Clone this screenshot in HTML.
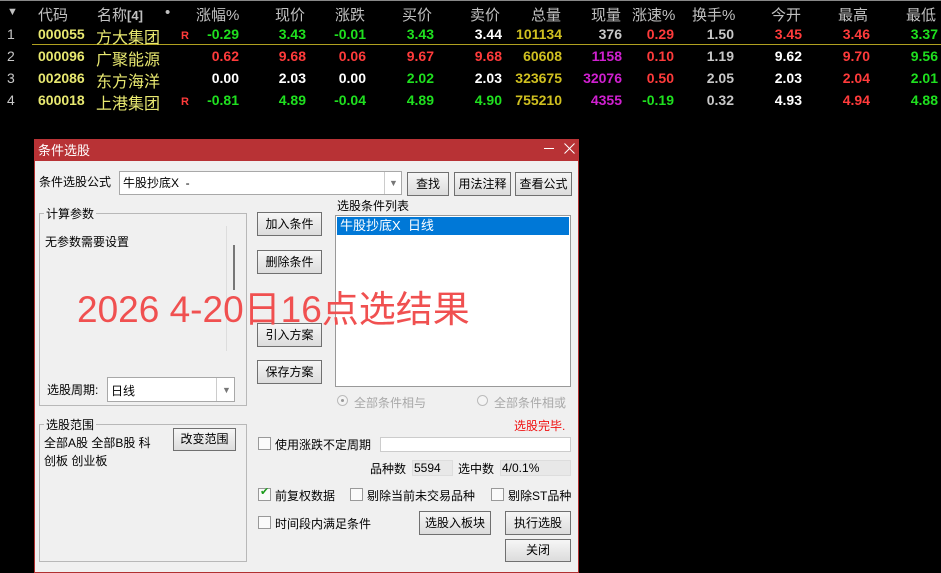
<!DOCTYPE html><html><head><meta charset="utf-8"><style>
*{margin:0;padding:0;box-sizing:border-box}
body{width:941px;height:573px;background:#000;position:relative;overflow:hidden;font-family:"Liberation Sans","Noto Sans CJK SC",sans-serif}
.a{position:absolute;white-space:nowrap}
.h{color:#c0c0c0;font-size:15px;top:4px}
.r{font-size:14px;font-weight:bold;text-align:right}
.c{color:#e8e870;font-size:14px;font-weight:bold}
.n{color:#e8e870;font-size:16px}
.g{color:#1fe01f}.rd{color:#ff3b3b}.w{color:#fff}.y{color:#d0c020}.m{color:#d020d0}.s{color:#c8c8c8}
.d{font-size:12px;color:#000}
.btn{position:absolute;background:linear-gradient(#f6f6f6,#dcdcdc);border:1px solid #707070;font-size:12px;text-align:center;color:#000}
.box{position:absolute;background:#fff;border:1px solid #a8a8a8}
.grp{position:absolute;border:1px solid #b8b8b8}
.cb{position:absolute;width:13px;height:13px;border:1px solid #999;background:#fafafa}
</style></head><body>
<div class="a" style="left:0;top:0;width:941px;height:1px;background:#888"></div>
<div class="a h" style="left:7px;font-size:11px;top:6px">▼</div>
<div class="a h" style="left:38px">代码</div>
<div class="a h" style="left:97px">名称<b style="font-size:13px">[4]</b></div>
<div class="a h" style="left:165px">•</div>
<div class="a h" style="left:196px">涨幅%</div>
<div class="a h" style="left:275px">现价</div>
<div class="a h" style="left:335px">涨跌</div>
<div class="a h" style="left:402px">买价</div>
<div class="a h" style="left:470px">卖价</div>
<div class="a h" style="left:531px">总量</div>
<div class="a h" style="left:591px">现量</div>
<div class="a h" style="left:632px">涨速%</div>
<div class="a h" style="left:692px">换手%</div>
<div class="a h" style="left:771px">今开</div>
<div class="a h" style="left:838px">最高</div>
<div class="a h" style="left:906px">最低</div>
<div class="a" style="left:32px;top:44px;width:909px;height:1px;background:#b0a020"></div>
<div id="rows"></div>
<script>
var rows=[
[1,"000055","方大集团",1,["g","-0.29"],["g","3.43"],["g","-0.01"],["g","3.43"],["w","3.44"],["y","101134"],["s","376"],["rd","0.29"],["s","1.50"],["rd","3.45"],["rd","3.46"],["g","3.37"]],
[2,"000096","广聚能源",0,["rd","0.62"],["rd","9.68"],["rd","0.06"],["rd","9.67"],["rd","9.68"],["y","60608"],["m","1158"],["rd","0.10"],["s","1.19"],["w","9.62"],["rd","9.70"],["g","9.56"]],
[3,"002086","东方海洋",0,["w","0.00"],["w","2.03"],["w","0.00"],["g","2.02"],["w","2.03"],["y","323675"],["m","32076"],["rd","0.50"],["s","2.05"],["w","2.03"],["rd","2.04"],["g","2.01"]],
[4,"600018","上港集团",1,["g","-0.81"],["g","4.89"],["g","-0.04"],["g","4.89"],["g","4.90"],["y","755210"],["m","4355"],["g","-0.19"],["s","0.32"],["w","4.93"],["rd","4.94"],["g","4.88"]]];
var R=[239,306,366,434,502,562,622,674,734,802,870,938],h="";
rows.forEach(function(r,i){var t=26+i*22;
h+='<div class="a s" style="left:7px;top:'+(t)+'px;font-size:14px">'+r[0]+'</div>';
h+='<div class="a c" style="left:38px;top:'+t+'px">'+r[1]+'</div>';
h+='<div class="a n" style="left:96px;top:'+(t-2)+'px">'+r[2]+'</div>';
if(r[3])h+='<div class="a rd" style="left:181px;top:'+(t+4)+'px;font-size:11px;font-weight:bold">R</div>';
for(var k=0;k<12;k++){var v=r[4+k];h+='<div class="a r '+v[0]+'" style="right:'+(941-R[k])+'px;top:'+t+'px">'+v[1]+'</div>';}
});
document.getElementById('rows').innerHTML=h;
</script>
<div class="a" style="left:34px;top:139px;width:545px;height:434px;background:#f0f0f0;border:1px solid #b03030;border-top:none"></div>
<div class="a" style="left:34px;top:139px;width:545px;height:22px;background:#b83235"></div>
<div class="a" style="left:38px;top:140px;color:#fff;font-size:13px">条件选股</div>
<div class="a" style="left:544px;top:148px;width:10px;height:1px;background:#fff"></div>
<svg class="a" style="left:564px;top:143px" width="11" height="11"><path d="M0.5 0.5L10.5 10.5M10.5 0.5L0.5 10.5" stroke="#fff" stroke-width="1"/></svg>
<div class="a d" style="left:39px;top:173px">条件选股公式</div>
<div class="box" style="left:119px;top:171px;width:283px;height:24px"></div>
<div class="a d" style="left:123px;top:174px">牛股抄底X &nbsp;-</div>
<div class="a" style="left:384px;top:172px;width:1px;height:22px;background:#ccc"></div>
<div class="a" style="left:389px;top:178px;color:#777;font-size:9px">▼</div>
<div class="btn" style="left:407px;top:172px;width:42px;height:24px;line-height:22px">查找</div>
<div class="btn" style="left:454px;top:172px;width:57px;height:24px;line-height:22px">用法注释</div>
<div class="btn" style="left:515px;top:172px;width:57px;height:24px;line-height:22px">查看公式</div>
<div class="grp" style="left:39px;top:213px;width:208px;height:193px"></div>
<div class="a d" style="left:44px;top:205px;background:#f0f0f0;padding:0 2px">计算参数</div>
<div class="a d" style="left:45px;top:233px">无参数需要设置</div>
<div class="a" style="left:226px;top:226px;width:1px;height:125px;background:#ddd"></div>
<div class="a" style="left:233px;top:245px;width:2px;height:45px;background:#777"></div>
<div class="a d" style="left:47px;top:381px">选股周期:</div>
<div class="box" style="left:107px;top:377px;width:128px;height:25px"></div>
<div class="a d" style="left:111px;top:382px">日线</div>
<div class="a" style="left:216px;top:378px;width:1px;height:23px;background:#ccc"></div>
<div class="a" style="left:222px;top:385px;color:#777;font-size:9px">▼</div>
<div class="btn" style="left:257px;top:212px;width:65px;height:24px;line-height:22px">加入条件</div>
<div class="btn" style="left:257px;top:250px;width:65px;height:24px;line-height:22px">删除条件</div>
<div class="btn" style="left:257px;top:323px;width:65px;height:24px;line-height:22px">引入方案</div>
<div class="btn" style="left:257px;top:360px;width:65px;height:24px;line-height:22px">保存方案</div>
<div class="a d" style="left:337px;top:197px">选股条件列表</div>
<div class="box" style="left:335px;top:215px;width:236px;height:172px;border-color:#999"></div>
<div class="a" style="left:337px;top:217px;width:232px;height:18px;background:#0078d7;color:#fff;font-size:13px;padding-left:3px;line-height:18px">牛股抄底X &nbsp;日线</div>
<div class="a" style="left:337px;top:395px;width:11px;height:11px;border-radius:50%;border:1px solid #bbb;background:#f4f4f4"></div>
<div class="a" style="left:341px;top:399px;width:3px;height:3px;border-radius:50%;background:#999"></div>
<div class="a" style="left:354px;top:394px;font-size:12px;color:#a8a8a8">全部条件相与</div>
<div class="a" style="left:477px;top:395px;width:11px;height:11px;border-radius:50%;border:1px solid #bbb;background:#f4f4f4"></div>
<div class="a" style="left:494px;top:394px;font-size:12px;color:#a8a8a8">全部条件相或</div>
<div class="grp" style="left:39px;top:424px;width:208px;height:138px"></div>
<div class="a d" style="left:44px;top:416px;background:#f0f0f0;padding:0 2px">选股范围</div>
<div class="a d" style="left:44px;top:434px">全部A股 全部B股 科</div>
<div class="a d" style="left:44px;top:452px">创板 创业板</div>
<div class="btn" style="left:173px;top:428px;width:63px;height:23px;line-height:21px">改变范围</div>
<div class="a" style="left:514px;top:417px;font-size:12px;color:#f01010">选股完毕.</div>
<div class="cb" style="left:258px;top:437px"></div>
<div class="a d" style="left:275px;top:436px">使用涨跌不定周期</div>
<div class="box" style="left:380px;top:437px;width:191px;height:15px;border-color:#ccc"></div>
<div class="a d" style="left:370px;top:460px">品种数</div>
<div class="a" style="left:412px;top:460px;width:41px;height:16px;background:#e8e8e8;border:1px solid #ddd;font-size:12px;padding-left:1px">5594</div>
<div class="a d" style="left:458px;top:460px">选中数</div>
<div class="a" style="left:500px;top:460px;width:71px;height:16px;background:#e8e8e8;border:1px solid #ddd;font-size:12px;padding-left:1px">4/0.1%</div>
<div class="cb" style="left:258px;top:488px"></div>
<div class="a" style="left:260px;top:485px;color:#1a9a1a;font-size:11px">✔</div>
<div class="a d" style="left:275px;top:487px">前复权数据</div>
<div class="cb" style="left:350px;top:488px"></div>
<div class="a d" style="left:367px;top:487px">剔除当前未交易品种</div>
<div class="cb" style="left:491px;top:488px"></div>
<div class="a d" style="left:508px;top:487px">剔除ST品种</div>
<div class="cb" style="left:258px;top:516px"></div>
<div class="a d" style="left:275px;top:515px">时间段内满足条件</div>
<div class="btn" style="left:419px;top:511px;width:72px;height:24px;line-height:22px">选股入板块</div>
<div class="btn" style="left:505px;top:511px;width:66px;height:24px;line-height:22px">执行选股</div>
<div class="btn" style="left:505px;top:539px;width:66px;height:23px;line-height:21px">关闭</div>
<div class="a" style="left:77px;top:279px;font-size:37px;color:#f05050">2026 4-20日16点选结果</div>
</body></html>
